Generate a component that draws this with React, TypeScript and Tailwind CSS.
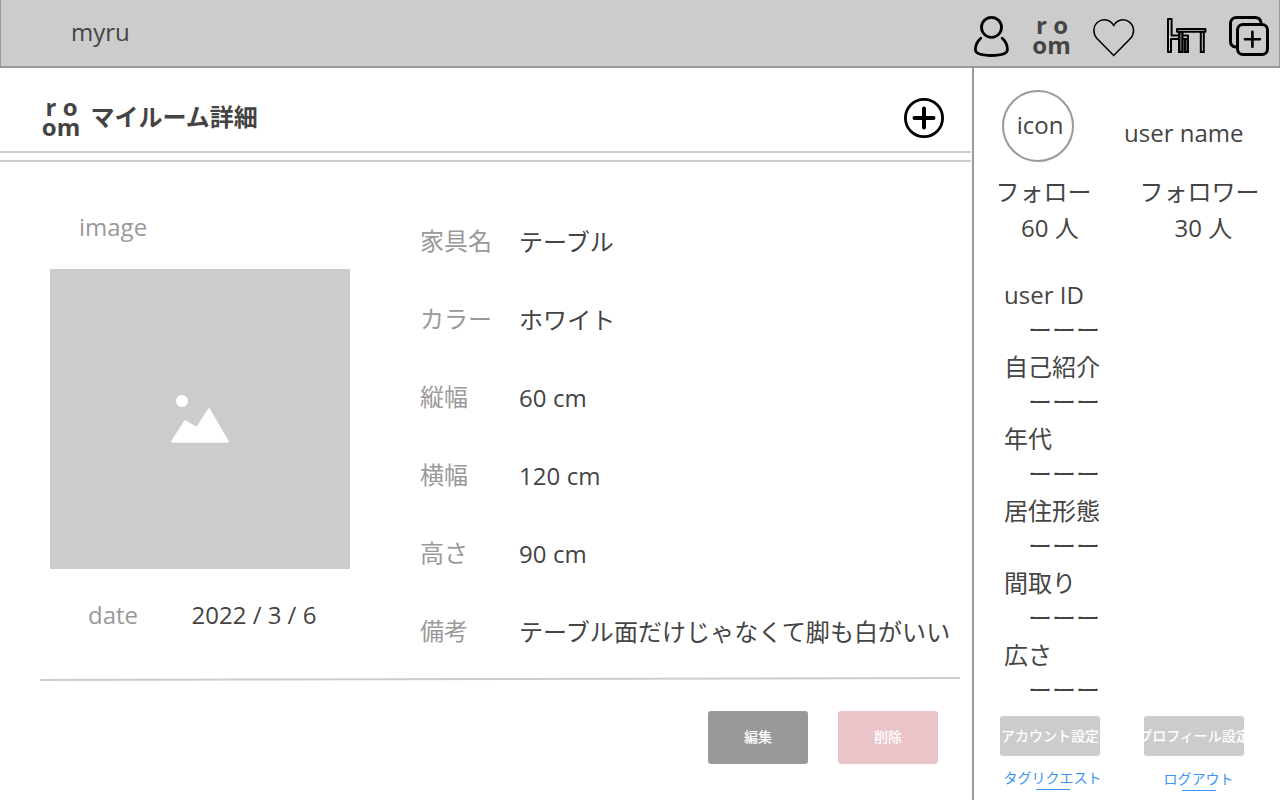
import React from "react";

const specs = [
  { label: "家具名", value: "テーブル" },
  { label: "カラー", value: "ホワイト" },
  { label: "縦幅", value: "60 cm" },
  { label: "横幅", value: "120 cm" },
  { label: "高さ", value: "90 cm" },
  { label: "備考", value: "テーブル面だけじゃなくて脚も白がいい" },
];

const profile = ["user ID", "自己紹介", "年代", "居住形態", "間取り", "広さ"];

function RoomLogo() {
  return (
    <div className="w-[40px] text-center text-[24px] leading-[20px] font-bold whitespace-pre">
      <div className="pl-px">r o</div>
      <div>om</div>
    </div>
  );
}

function UserIcon() {
  return (
    <svg width="38" height="44" viewBox="0 0 38 44" fill="none" stroke="#000" strokeWidth="2.8" strokeLinecap="round">
      <circle cx="19.5" cy="12.3" r="10" />
      <path d="M8.8 23.2C5 26.5 3.4 31 3.4 34.6C3.4 39 9 40.5 19.5 40.5C30 40.5 35.4 39 35.4 34.6C35.4 31 34 26.5 30.2 23.2" />
    </svg>
  );
}

function HeartIcon() {
  return (
    <svg width="42" height="40" viewBox="0 0 42 40" fill="none" stroke="#000" strokeWidth="1.5" strokeLinejoin="round">
      <path d="M20.7 37.6L4 20.4C-0.6 15.5 0.2 8 4.6 4.3C9.8 0 17.4 1.4 20.7 7.6C24 1.4 31.6 0 36.8 4.3C41.2 8 42 15.5 37.4 20.4Z" />
    </svg>
  );
}

function DeskIcon() {
  return (
    <svg width="42" height="38" viewBox="0 0 42 38" fill="none" stroke="#000" strokeWidth="2">
      <path d="M2 35V2H5.6V18.6H22V22H5V35Z" strokeLinejoin="round" />
      <rect x="13" y="14.6" width="3.6" height="20.4" fill="#555" />
      <rect x="18.8" y="22" width="3.2" height="13" fill="#555" />
      <rect x="34.8" y="14.6" width="3" height="20.4" />
      <rect x="11" y="12" width="28.4" height="2.8" fill="#ccc" strokeLinejoin="round" />
    </svg>
  );
}

function CopyPlusIcon() {
  return (
    <svg width="42" height="42" viewBox="0 0 42 42" fill="none" stroke="#000" strokeWidth="3" strokeLinecap="round">
      <path d="M7.5 32C4.5 31.5 2.5 29.5 2.5 26.5V8.5C2.5 5 5 2.5 8.5 2.5H27C30 2.5 32.5 4.5 33 7.5" />
      <rect x="9.5" y="9.5" width="30" height="30" rx="5.5" />
      <path d="M24.4 16.8V31.8M16.9 24.3H31.9" strokeWidth="2.6" />
    </svg>
  );
}

function Header() {
  return (
    <header className="flex h-[68px] w-full items-start border-x border-b-2 border-[#999] bg-[#ccc]">
      <div className="ml-[70px] pt-4 text-[24px] leading-8">myru</div>
      <div className="ml-auto flex">
        <div className="pt-[15px]"><UserIcon /></div>
        <div className="ml-[21.5px] pt-[15px]"><RoomLogo /></div>
        <div className="ml-[21.5px] pt-[18px]"><HeartIcon /></div>
        <div className="ml-[31px] pt-[17px]"><DeskIcon /></div>
        <div className="mr-[9px] ml-[20px] pt-[15px]"><CopyPlusIcon /></div>
      </div>
    </header>
  );
}

function Detail() {
  return (
    <main className="w-[972px] shrink-0">
      <div className="flex h-[83px] w-[971px] pl-[41px]">
        <div className="pt-[29px]"><RoomLogo /></div>
        <h1 className="ml-[9.5px] pt-[33px] text-[24px] leading-8 font-bold">マイルーム詳細</h1>
        <svg className="mt-[29px] mr-[26px] ml-auto" width="42" height="42" viewBox="0 0 42 42" fill="none" stroke="#000" strokeLinecap="round">
          <circle cx="21" cy="21" r="18.6" strokeWidth="2.8" />
          <path d="M21 11.5V30.5M11.5 21H30.5" strokeWidth="4" />
        </svg>
      </div>
      <div className="h-[11px] w-[971px] border-y-2 border-[#ccc]" />
      <div className="flex h-[515px]">
        <section className="ml-[50px] w-[300px] pt-[49px] text-[24px] leading-8">
          <div className="pl-[29px] text-[#999]">image</div>
          <div className="mt-[26px] flex h-[300px] items-center justify-center bg-[#ccc]">
            <svg width="60" height="52" viewBox="0 0 60 52" fill="#fff">
              <circle cx="12" cy="8" r="6" />
              <path d="M2.3 48.6L15.2 28.5L27 35.4L39 16.5L57.7 48.6Z" stroke="#fff" strokeWidth="2.4" strokeLinejoin="round" />
            </svg>
          </div>
          <div className="mt-[30px] flex pl-[38px]">
            <div className="w-[103.5px] text-[#999]">date</div>
            <div>2022 / 3 / 6</div>
          </div>
        </section>
        <dl className="ml-[70px] pt-[40px] text-[24px] leading-[78px]">
          {specs.map((s) => (
            <div key={s.label} className="flex h-[78px] whitespace-nowrap">
              <dt className="w-[99px] text-[#999]">{s.label}</dt>
              <dd className="pt-px tracking-[0.08px]">{s.value}</dd>
            </div>
          ))}
        </dl>
      </div>
      <svg className="ml-10 block" width="920" height="4" viewBox="0 0 920 4">
        <path d="M0 3L920 1" stroke="#ccc" strokeWidth="2" />
      </svg>
      <div className="mt-[30px] mr-[34px] flex justify-end gap-[30px] text-[14px] font-medium text-white">
        <button className="h-[53px] w-[100px] rounded-[3px] bg-[#999] pb-[3px]">編集</button>
        <button className="h-[53px] w-[100px] rounded-[3px] bg-[#ebc4c9] pb-[3px]">削除</button>
      </div>
    </main>
  );
}

function Sidebar() {
  return (
    <aside className="h-[732px] grow border-l-2 border-[#999] text-[24px] leading-9">
      <div className="flex pt-[22px] pl-7">
        <div className="flex h-[72px] w-[72px] items-center justify-center rounded-full border-2 border-[#999] pb-[2px] pl-1">icon</div>
        <div className="ml-[50px] pt-[25px]">user name</div>
      </div>
      <div className="mt-[12px] flex">
        <div className="ml-[21.5px] w-[144px]">
          <div>フォロー</div>
          <div className="pl-[25.5px]">60 人</div>
        </div>
        <div>
          <div>フォロワー</div>
          <div className="pl-[35px]">30 人</div>
        </div>
      </div>
      <dl className="mt-[31px] pl-[30px]">
        {profile.map((p) => (
          <div key={p}>
            <dt>{p}</dt>
            <dd className="-mt-px pb-px pl-6">ーーー</dd>
          </div>
        ))}
      </dl>
      <div className="mt-[7px] ml-[26px] flex gap-[44px] text-[14px] font-medium text-white">
        <button className="flex h-10 w-[100px] items-center justify-center overflow-hidden rounded-[3px] bg-[#ccc] whitespace-nowrap">アカウント設定</button>
        <button className="flex h-10 w-[100px] items-center justify-center overflow-hidden rounded-[3px] bg-[#ccc] whitespace-nowrap">プロフィール設定</button>
      </div>
      <div className="mt-[11px] ml-[29.5px] flex text-[14px] leading-[22px] text-[#3b94f5]">
        <a className="flex w-[98px] flex-col items-center">
          タグリクエスト
          <span className="h-px w-[34px] bg-[#3b94f5]" />
        </a>
        <a className="ml-[62px] flex w-[70px] flex-col items-center pt-px">
          ログアウト
          <span className="h-px w-[34px] bg-[#3b94f5]" />
        </a>
      </div>
    </aside>
  );
}

export default function App() {
  return (
    <div className="h-[800px] w-[1280px] overflow-hidden bg-white font-['Open_Sans','Noto_Sans_CJK_JP',sans-serif] text-[#444]">
      <Header />
      <div className="flex">
        <Detail />
        <Sidebar />
      </div>
    </div>
  );
}
